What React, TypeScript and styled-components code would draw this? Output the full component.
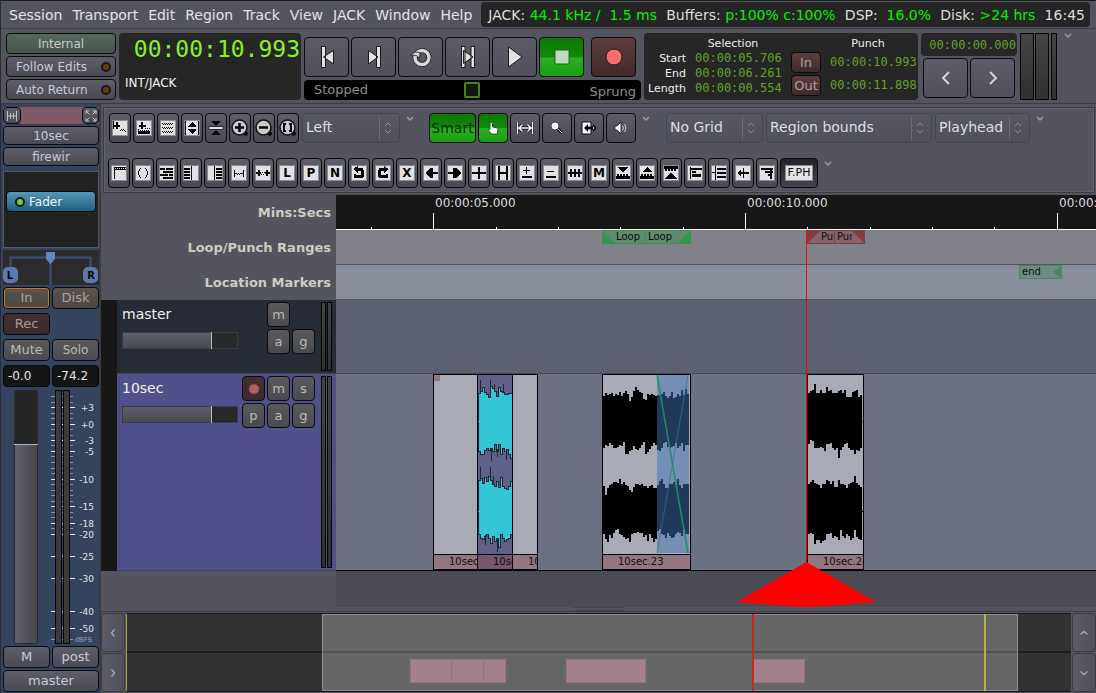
import React from "react";
import styled, { createGlobalStyle, css } from "styled-components";

const GlobalStyle = createGlobalStyle`
  *, *::before, *::after { box-sizing: border-box; }
  body {
    margin: 0;
    background: #53545d;
    color: #dedede;
    font: 12px/16px "DejaVu Sans", sans-serif;
  }
  button, select, input { font: inherit; color: inherit; margin: 0; }
  button { padding: 0; cursor: pointer; }
  svg { display: block; flex: none; }
`;

/* ---------- shared parts ---------- */

const face = {
  plain: "linear-gradient(#5e5e69, #4a4a54)",
  grey: "linear-gradient(#5b5c65, #4f5059)",
  flat: "linear-gradient(#5a5a5c, #494a52)",
  green: "linear-gradient(#0d7804 0%, #118a08 50%, #2cae26 52%, #17a010 100%)",
  olive: "linear-gradient(#55685a, #47554b)",
  red: "linear-gradient(#5e3d3f, #402a2c)",
  dimRed: "linear-gradient(#432f31, #3a2c2e)",
  brown: "linear-gradient(#5a534f, #4c4744)",
  blue: "linear-gradient(#5796b5, #1d6080)",
  pressed: "linear-gradient(#222228, #44444d)",
};

const ink: Partial<Record<keyof typeof face, string>> = {
  flat: "#b9bcab",
  red: "#a9a2a2",
  dimRed: "#a39c98",
  brown: "#a6a49c",
};

const Button = styled.button<{ $face?: keyof typeof face; $ring?: string; $size?: number }>`
  display: flex;
  align-items: center;
  justify-content: center;
  min-width: 0;
  border: 1px solid #0b0b0d;
  border-radius: 4px;
  box-shadow: ${(p) => (p.$ring ? `inset 0 0 0 1px ${p.$ring}` : "none")};
  background: ${(p) => face[p.$face ?? "plain"]};
  color: ${(p) => ink[p.$face ?? "plain"] ?? "#c9cad6"};
  font-size: ${(p) => p.$size ?? 12}px;
  overflow: hidden;
  white-space: nowrap;
`;

const Clock = styled.span<{ $size?: number; $bright?: boolean }>`
  font-family: "DejaVu Sans Mono", monospace;
  font-size: ${(p) => p.$size ?? 12}px;
  line-height: ${(p) => (p.$size ? 28 : 15)}px;
  color: ${(p) => (p.$bright ? "#8bf127" : "#65a125")};
  white-space: nowrap;
`;

const MeterBar = styled.div<{ $w: number }>`
  width: ${(p) => p.$w}px;
  border: 1px solid #050505;
  background: linear-gradient(#454545, #303030);
`;

const Chevron = () => (
  <svg width="8" height="6" viewBox="0 0 8 6" fill="none" stroke="#9c9ca0" strokeWidth="1.5">
    <path d="M1 1l3 3 3-3" />
  </svg>
);

/* ---------- menu bar ---------- */

const Page = styled.div`
  display: flex;
  flex-direction: column;
  min-height: 100vh;
  border-top: 1px solid #1d1d20;
  border-left: 1px solid #2c2c30;
  overflow: hidden;
`;

const MenuBar = styled.header`
  display: flex;
  align-items: center;
  height: 28px;
  padding: 0 6px 0 3px;
  border-bottom: 1px solid #3c3c42;
  font-size: 14px;
`;

const Menus = styled.nav`
  display: flex;
`;

const MenuButton = styled.button`
  border: 0;
  padding: 0 5px;
  background: none;
  color: #e3e3e3;
`;

const Status = styled.div`
  display: flex;
  flex: 1;
  align-items: center;
  justify-content: space-between;
  height: 25px;
  margin-left: 4px;
  padding: 0 5px 0 7px;
  border-radius: 4px;
  background: #252525;
  white-space: pre;
`;

const Good = styled.span`
  color: #00f400;
`;

/* ---------- transport ---------- */

const Transport = styled.section`
  display: flex;
  gap: 3px;
  height: 75px;
  padding: 4px 5px 3px;
  border-bottom: 1px solid #3c3c42;
`;

const SyncColumn = styled.div`
  display: grid;
  grid-template-rows: repeat(3, 21px);
  gap: 2px;
  width: 110px;
`;

const LedButton = styled(Button)`
  justify-content: space-between;
  padding: 0 4px 0 9px;
`;

const Led = styled.span<{ $on?: boolean }>`
  width: 10px;
  height: 10px;
  border: 2px solid #19191b;
  border-radius: 5px;
  background: ${(p) => (p.$on ? "#6fd03a" : "#5e4205")};
`;

const BigClock = styled.div`
  display: flex;
  flex-direction: column;
  justify-content: space-between;
  width: 182px;
  height: 67px;
  padding: 2px 1px 9px 6px;
  border-radius: 4px;
  background: #262626;
  color: #f2f2f2;
  line-height: 16px;
`;

const BigDigits = styled.div`
  text-align: right;
`;

const TransportColumn = styled.div`
  width: 337px;
  padding-top: 4px;
`;

const TransportButtons = styled.div`
  display: flex;
  gap: 2px;
  margin-bottom: 3px;
`;

const TransportButton = styled(Button)<{ $apart?: boolean }>`
  width: 45px;
  height: 40px;
  margin-left: ${(p) => (p.$apart ? 5 : 0)}px;
`;

const Shuttle = styled.div`
  display: grid;
  grid-template-columns: 70px 1fr 76px;
  align-items: center;
  height: 20px;
  padding: 0 5px 0 10px;
  border-radius: 4px;
  background: #000;
  color: #8d8d8d;
  font-size: 13px;
`;

const ShuttleSlider = styled.input`
  appearance: none;
  width: 100%;
  height: 18px;
  background: none;
  &::-webkit-slider-thumb {
    appearance: none;
    width: 16px;
    height: 16px;
    border: 2px solid #4a8218;
    border-radius: 2px;
    background: #10180a;
  }
`;

const ShuttleMode = styled.button`
  border: 0;
  padding-top: 3px;
  background: none;
  text-align: right;
`;

const SelectionBox = styled.div`
  display: flex;
  gap: 12px;
  width: 274px;
  height: 67px;
  padding: 3px 4px;
  border-radius: 4px;
  background: #262626;
  color: #ededed;
  font-size: 11px;
  line-height: 15px;
`;

const SelectionGrid = styled.div`
  display: grid;
  grid-template-columns: 38px 84px;
  grid-auto-rows: 15px;
  column-gap: 9px;
  text-align: right;
`;

const PunchGrid = styled.div`
  display: grid;
  grid-template: 14px 21px 21px / 30px 84px;
  gap: 2px 9px;
  align-items: center;
`;

const PunchButton = styled(Button)`
  height: 21px;
`;

const ClockHead = styled.span`
  grid-column: 2;
  padding-right: 8px;
  text-align: center;
`;

const NavColumn = styled.div`
  width: 96px;
`;

const NavClock = styled.div`
  height: 23px;
  margin-bottom: 2px;
  padding: 4px 1px;
  border-radius: 4px;
  background: #262626;
  text-align: right;
`;

const NavButtons = styled.div`
  display: grid;
  grid-template-columns: 45px 45px;
  grid-template-rows: 40px;
  gap: 2px;
  padding-left: 2px;
`;

const Meters = styled.div`
  display: flex;
  gap: 1px;
  height: 67px;
  margin-right: 4px;
`;

/* ---------- main split ---------- */

const Main = styled.main`
  display: flex;
  flex: 1;
`;

const EditorColumn = styled.div`
  display: flex;
  flex: 1;
  flex-direction: column;
  min-width: 0;
`;

/* ---------- mixer strip ---------- */

const Strip = styled.aside`
  display: flex;
  flex-direction: column;
  gap: 2px;
  width: 100px;
  padding: 3px 0 1px 2px;
  border-right: 2px solid #3c3c42;
  background: #34445f;
`;

const StripTop = styled.div`
  display: grid;
  grid-template: 17px / 18px 1fr 17px;
  background: #825a66;
`;

const StripButton = styled(Button)`
  height: ${(p) => (p.$size === 13 ? 22 : 19)}px;
`;

const Pair = styled.div`
  display: grid;
  grid-template-columns: 47px 47px;
  grid-auto-rows: 22px;
  gap: 4px 2px;
`;

const Processors = styled.div`
  height: 77px;
  margin: 3px 0 0;
  padding: 19px 2px;
  border: 1px solid #58585c;
  background: #222;
`;

const Processor = styled(Button)`
  justify-content: flex-start;
  gap: 4px;
  width: 100%;
  height: 21px;
  padding-left: 8px;
  color: #eef4f8;
`;

const GainInput = styled.input`
  width: 100%;
  height: 22px;
  border: 1px solid #08080a;
  border-radius: 4px;
  padding: 0 4px;
  background: #151515;
  color: #e6e6e6;
  font-size: 12px;
`;

const FaderArea = styled.div`
  display: flex;
  flex: 1;
  gap: 13px;
  min-height: 254px;
  margin-top: 1px;
  padding-left: 11px;
`;

const VerticalFader = styled.input`
  appearance: none;
  writing-mode: vertical-lr;
  direction: rtl;
  width: 24px;
  min-height: 0;
  border: 1px solid #26282c;
  border-radius: 2px;
  background: linear-gradient(#232526 0 21%, transparent 21%),
    linear-gradient(90deg, #60606c, #484852);
  &::-webkit-slider-thumb {
    appearance: none;
    width: 24px;
    height: 1px;
    background: #b3b3c6;
  }
`;

/* ---------- toolbars ---------- */

const ToolPanel = styled.section`
  display: flex;
  flex-direction: column;
  justify-content: space-between;
  height: 86px;
  margin: 3px 1px 2px 2px;
  padding: 5px 4px 4px;
  border: 1px solid #3a3a40;
  box-shadow: inset 0 0 0 1px #5f6069;
`;

const ToolRow = styled.div<{ $indent?: number }>`
  display: flex;
  gap: 2px;
  height: 30px;
  padding-left: ${(p) => p.$indent ?? 0}px;
`;

const ToolButton = styled(Button)<{ $w: number }>`
  flex: none;
  width: ${(p) => p.$w}px;
`;

const ChevronSlot = styled.span<{ $after?: number }>`
  width: 8px;
  margin: 3px ${(p) => p.$after ?? 0}px 0 4px;
`;

const PickerFrame = styled.label<{ $w: number }>`
  display: grid;
  grid-template-columns: 1fr 20px;
  align-items: center;
  width: ${(p) => p.$w}px;
  height: 30px;
  margin-left: 1px;
  border: 1px solid #45464e;
  border-radius: 4px;
  background: linear-gradient(#575861, #4f5059);
`;

const PickerSelect = styled.select`
  grid-area: 1 / 1 / 2 / 3;
  appearance: none;
  height: 28px;
  border: 0;
  padding: 0 0 2px 3px;
  background: none;
  color: #dedee2;
  font-size: 14px;
`;

const PickerArrows = styled.span`
  grid-area: 1 / 2;
  display: flex;
  align-items: center;
  height: 24px;
  padding-left: 4px;
  border-left: 1px solid #6b6c74;
  pointer-events: none;
`;

const Picker = ({ label, value, w }: { label: string; value: string; w: number }) => (
  <PickerFrame $w={w}>
    <PickerSelect aria-label={label}>
      <option>{value}</option>
    </PickerSelect>
    <PickerArrows>
      <svg width="8" height="12" viewBox="0 0 8 12" fill="none" stroke="#8d8e94">
        <path d="M1 4l3-3 3 3M1 8l3 3 3-3" />
      </svg>
    </PickerArrows>
  </PickerFrame>
);

const SmartText = styled.span`
  color: #0a2c08;
`;

const Plate = styled.span`
  padding: 0 2px;
  border: 1px solid #8c8c90;
  background: #e2e2e4;
  color: #080808;
  font-size: 11px;
  line-height: 14px;
`;

type Art = { r?: string; d?: string; t?: string };

const rects = (list: string) =>
  list
    .split(" ")
    .map((s) => {
      const [x, y, w, h] = s.split(",");
      return `M${x} ${y}h${w}v${h}h-${w}z`;
    })
    .join("");

const TileIcon = ({ r, d, t }: Art) => (
  <svg width="16" height="16" viewBox="0 0 16 16" shapeRendering="crispEdges">
    <rect width="16" height="16" fill="#8c8c90" />
    <rect x="1" y="1" width="14" height="14" fill="#e2e2e4" />
    {r && <path d={rects(r)} fill="#050505" />}
    {d && <path d={d} fill="#050505" />}
    {t && (
      <text x="8" y="12" textAnchor="middle" fontSize="12" fontWeight="700" fill="#050505">
        {t}
      </text>
    )}
  </svg>
);

const zoomArt: (Art & { name: string })[] = [
  { name: "Zoom to selection", r: "4,2,2,7 2,5,6,2 1,1,1,8 8,10,1,1 9,9,1,1 10,10,1,1 11,9,1,1 12,10,1,1 13,11,1,1" },
  { name: "Zoom to session", r: "5,2,2,7 3,5,7,2 9,8,1,1 11,8,1,1 13,8,1,1 2,9,1,3 4,10,1,1 6,10,1,1 8,10,1,1 10,10,1,1 12,10,1,1 2,11,12,3" },
  { name: "Fit tracks", r: "2,3,1,1 4,3,1,1 6,3,1,1 8,3,1,1 10,3,1,1 12,3,1,1 3,4,1,1 5,4,1,1 7,4,1,1 9,4,1,1 11,4,1,1 2,7,1,1 4,7,1,1 6,7,1,1 8,7,1,1 10,7,1,1 12,7,1,1 3,8,1,1 5,8,1,1 7,8,1,1 9,8,1,1 11,8,1,1 2,11,1,1 4,11,1,1 6,11,1,1 8,11,1,1 10,11,1,1 12,11,1,1 3,12,1,1 5,12,1,1 7,12,1,1 9,12,1,1 11,12,1,1" },
  { name: "Expand tracks", r: "1,1,1,14 14,1,1,14", d: "M8 2l4 4v1H4V6zM8 14l4-4V9H4v1z" },
];

const editArt: (Art & { name: string })[] = [
  { name: "Range", r: "3,2,1,12 4,2,11,1 4,4,11,1 5,3,1,1 7,3,1,1 9,3,1,1 11,3,1,1 13,3,1,1" },
  { name: "Loop range", r: "5,3,1,1 4,4,1,2 3,6,1,4 4,10,1,2 5,12,1,1 10,3,1,1 11,4,1,2 12,6,1,4 11,10,1,2 10,12,1,1" },
  { name: "Stagger", r: "1,3,5,2 7,3,7,2 4,6,10,2 1,9,8,2 10,9,4,2 4,12,10,2" },
  { name: "Bars left", r: "1,3,6,2 1,6,6,2 1,9,6,2 1,12,6,2 8,1,1,14" },
  { name: "Bars right", r: "9,3,6,2 9,6,6,2 9,9,6,2 9,12,6,2 7,1,1,14" },
  { name: "Fit inside", r: "3,5,1,7 12,5,1,7 4,8,2,1 6,9,1,1 7,8,1,1 8,9,1,1 9,8,1,1 10,8,2,1" },
  { name: "Fit outside", r: "3,5,2,6 11,5,2,6 1,7,5,2 10,7,5,2 6,9,1,1 7,7,1,1 8,9,1,1 9,7,1,1" },
  { name: "Lock", t: "L" },
  { name: "Place", t: "P" },
  { name: "Normalize", t: "N" },
  { name: "Undo", r: "6,3,6,3 10,5,3,7 4,10,8,3 3,9,2,4", d: "M2 4l5-3v7z" },
  { name: "Redo", r: "4,3,6,3 3,5,3,7 4,10,8,3 11,9,2,4", d: "M14 4L9 1v7z" },
  { name: "Delete", t: "X" },
  { name: "Nudge left", r: "8,7,7,2", d: "M2 8l5-5h3v10H7z" },
  { name: "Nudge right", r: "1,7,7,2", d: "M14 8L9 3H6v10h3z" },
  { name: "Split", r: "1,7,14,2 7,2,2,12" },
  { name: "Join", r: "3,1,2,14 11,1,2,14 5,7,6,2" },
  { name: "Gain up", r: "4,5,7,1 7,2,1,7 3,11,10,2" },
  { name: "Gain down", r: "4,6,7,1 3,11,10,2" },
  { name: "Transients", r: "1,7,14,2 3,4,2,8 7,4,2,8 11,4,2,8" },
  { name: "Mute region", t: "M" },
  { name: "Lower", r: "2,9,2,2 5,9,2,2 8,9,2,2 11,9,2,2 1,11,14,3", d: "M3 2h10L8 8z" },
  { name: "Raise", r: "2,9,2,2 5,9,2,2 8,9,2,2 11,9,2,2 1,11,14,3", d: "M3 7h10L8 2z" },
  { name: "Raise to top", r: "1,1,14,3 2,4,2,2 5,4,2,2 8,4,2,2 11,4,2,2", d: "M2 14h12L8 7z" },
  { name: "Align start", r: "3,2,1,12 4,3,11,2 5,6,4,2 5,9,9,3" },
  { name: "Align sync", r: "4,1,1,14 6,3,9,2 6,7,9,2 6,11,9,2 1,7,3,1" },
  { name: "Align end", r: "8,3,1,10 9,7,5,2 3,7,5,2 5,5,1,6 4,6,1,4" },
  { name: "Align relative", r: "2,3,12,2 6,6,8,2 9,9,3,2 11,5,2,9" },
];

const Lens = ({ children }: { children: React.ReactNode }) => (
  <svg width="18" height="18" viewBox="0 0 18 18">
    <path d="M12 12l4 4" stroke="#050505" strokeWidth="4" />
    <circle cx="8.500" cy="8.500" r="7.500" fill="#c9c9cb" stroke="#111" strokeWidth="1.500" />
    {children}
  </svg>
);

/* ---------- timeline ---------- */

const Editor = styled.section`
  position: relative;
  display: flex;
  flex: 1;
  flex-direction: column;
  overflow: hidden;
`;

const Row = styled.div<{ $h: number }>`
  display: grid;
  grid-template-columns: 235px 1fr;
  height: ${(p) => p.$h}px;
`;

const RulerName = styled.div`
  padding-right: 5px;
  color: #cccdbf;
  font-size: 13px;
  font-weight: 700;
  line-height: 35px;
  text-align: right;
`;

const Lane = styled.div<{ $bg: string; $line: string }>`
  position: relative;
  overflow: hidden;
  border-bottom: 1px solid ${(p) => p.$line};
  background: ${(p) => p.$bg};
`;

const Tick = styled.span<{ $x: number; $major?: boolean }>`
  position: absolute;
  bottom: 0;
  left: ${(p) => p.$x}px;
  width: 1px;
  height: ${(p) => (p.$major ? 16 : 2)}px;
  background: #fff;
`;

const TickLabel = styled.span<{ $x: number }>`
  position: absolute;
  top: 0;
  left: ${(p) => p.$x}px;
  color: #dedede;
  white-space: nowrap;
`;

const MarkerBox = styled.div<{ $x: number; $w: number; $tone: string; $pad: number }>`
  position: absolute;
  top: 0;
  left: ${(p) => p.$x}px;
  width: ${(p) => p.$w}px;
  height: 14px;
  padding-left: ${(p) => p.$pad}px;
  overflow: hidden;
  border: 1px solid ${(p) => p.$tone};
  background: ${(p) => p.$tone}66;
  color: #0c0c0c;
  font-size: 10px;
  line-height: 11px;
`;

const flagShape = {
  bottomLeft: css`left: 0; clip-path: polygon(0 0, 100% 100%, 0 100%);`,
  bottomRight: css`right: 0; clip-path: polygon(100% 0, 100% 100%, 0 100%);`,
  topLeft: css`left: 0; clip-path: polygon(0 0, 100% 0, 0 100%);`,
  topRight: css`right: 0; clip-path: polygon(0 0, 100% 0, 100% 100%);`,
  arrow: css`right: 0; width: 8px; clip-path: polygon(100% 0, 100% 100%, 0 50%);`,
};

const Flag = styled.span<{ $shape: keyof typeof flagShape; $tone: string }>`
  position: absolute;
  top: 0;
  width: 12px;
  height: 12px;
  background: ${(p) => p.$tone};
  ${(p) => flagShape[p.$shape]}
`;

const MarkerText = styled.span<{ $w?: number }>`
  display: block;
  width: ${(p) => (p.$w ? `${p.$w}px` : "auto")};
  overflow: hidden;
`;

const HeaderWrap = styled.div`
  display: grid;
  grid-template-columns: 16px 1fr;
  background: #171717;
`;

const TrackHeader = styled.div<{ $bg: string }>`
  display: grid;
  grid-template-columns: 120px 79px 11px;
  padding: 2px 4px 2px 5px;
  border-bottom: 1px solid #44454c;
  background: ${(p) => p.$bg};
`;

const TrackName = styled.div`
  height: 30px;
  color: #f0f0f0;
  font-size: 14px;
  line-height: 24px;
`;

const TrackFader = styled.input`
  appearance: none;
  display: block;
  width: 116px;
  height: 17px;
  border: 1px solid #3a3b40;
  background: linear-gradient(90deg, transparent 78%, #26282a 78%),
    linear-gradient(#5e5f69, #484851);
  &::-webkit-slider-thumb {
    appearance: none;
    width: 1px;
    height: 17px;
    background: #b8b8c8;
  }
`;

const TrackButtons = styled.div`
  display: grid;
  grid-template-columns: repeat(3, 23px);
  grid-auto-rows: 25px;
  gap: 2px;
`;

const MiniButton = styled(Button)<{ $col?: number }>`
  grid-column: ${(p) => p.$col ?? "auto"};
`;

const TrackMeters = styled.div`
  display: flex;
  gap: 1px;
`;

const RegionBox = styled.div<{ $x: number; $w: number; $bg: string }>`
  position: absolute;
  top: 0;
  bottom: 0;
  left: ${(p) => p.$x}px;
  display: flex;
  flex-direction: column;
  width: ${(p) => p.$w}px;
  border: 1px solid #000;
  background: ${(p) => p.$bg};
`;

const RegionBody = styled.div`
  flex: 1;
  min-height: 0;
  overflow: hidden;
`;

const Handle = styled.div`
  width: 6px;
  height: 6px;
  background: #937681;
`;

const RegionName = styled.div<{ $bg: string }>`
  height: 15px;
  padding-left: 15px;
  overflow: hidden;
  border-top: 1px solid #000;
  background: ${(p) => p.$bg};
  color: #120c0e;
  font-size: 10px;
  line-height: 14px;
  white-space: nowrap;
`;

const Filler = styled.div`
  display: grid;
  grid-template-columns: 235px 1fr;
  flex: 1;
  min-height: 36px;
`;

const FillerLane = styled.div`
  grid-column: 2;
  background: #4b4b55;
`;

const Playhead = styled.svg`
  position: absolute;
  top: 35px;
  left: 636px;
`;

const Grip = styled.div`
  width: 48px;
  height: 4px;
  margin: 0 auto;
  border: dotted #36363c;
  border-width: 1px 0;
`;

/* waveform edges, one value per two pixels */
type Wave = { top1: number[]; bot1: number[]; top2: number[]; bot2: number[] };

const waveCyan: Wave = {
  top1: [18, 16, 12, 17, 19, 22, 11, 13, 16, 21, 12, 16, 17, 19, 19, 18, 18],
  bot1: [76, 79, 79, 75, 73, 75, 73, 76, 69, 76, 69, 79, 73, 76, 74, 79, 83],
  top2: [105, 103, 108, 102, 106, 101, 105, 109, 111, 106, 112, 102, 111, 113, 114, 111, 106],
  bot2: [159, 163, 164, 161, 159, 163, 168, 161, 166, 163, 172, 159, 163, 166, 164, 163, 159],
};

const wave23: Wave = {
  top1: [21, 18, 20, 19, 18, 21, 19, 20, 17, 21, 18, 16, 19, 26, 22, 16, 12, 15, 17, 18, 24, 25, 19, 20, 19, 20, 21, 20, 20, 19, 17, 21, 23, 21, 17, 23, 22, 19, 21, 15, 20, 14, 19],
  bot1: [73, 70, 71, 68, 70, 73, 73, 72, 70, 71, 67, 79, 79, 76, 75, 71, 74, 75, 73, 70, 67, 79, 77, 74, 71, 68, 70, 75, 76, 73, 68, 67, 72, 73, 72, 71, 68, 73, 71, 68, 76, 70, 70],
  top2: [111, 120, 113, 110, 109, 107, 107, 108, 104, 109, 107, 110, 111, 115, 117, 112, 109, 109, 110, 109, 111, 111, 113, 111, 110, 113, 113, 110, 106, 104, 109, 113, 113, 109, 109, 107, 110, 104, 110, 113, 109, 109, 109],
  bot2: [159, 164, 167, 160, 163, 158, 155, 154, 159, 160, 162, 164, 163, 167, 159, 158, 158, 157, 158, 158, 162, 160, 166, 159, 163, 167, 164, 156, 154, 159, 160, 163, 158, 161, 163, 162, 159, 157, 158, 161, 154, 159, 159],
};

const wave24: Wave = {
  top1: [18, 16, 15, 9, 18, 18, 15, 18, 18, 12, 16, 15, 18, 18, 18, 16, 15, 18, 15, 22, 22, 22, 17, 16, 15, 22, 20],
  bot1: [69, 65, 66, 73, 73, 73, 72, 73, 76, 69, 69, 68, 73, 75, 73, 83, 75, 72, 69, 68, 73, 75, 75, 79, 75, 76, 73],
  top2: [109, 107, 105, 108, 109, 110, 113, 109, 109, 105, 106, 109, 106, 112, 112, 105, 109, 109, 110, 113, 109, 108, 107, 101, 108, 110, 112],
  bot2: [159, 158, 159, 169, 165, 165, 168, 166, 165, 159, 159, 158, 163, 161, 162, 165, 155, 161, 163, 159, 161, 165, 163, 155, 162, 164, 165],
};

const channel = (top: number[], bottom: number[]) =>
  `M0 ${top[0]}` +
  top.map((y, i) => `V${y}H${i * 2 + 2}`).join("") +
  [...bottom].reverse().map((y, i) => `V${y}H${(bottom.length - 1 - i) * 2}`).join("") +
  "z";

const Waveform = ({ wave, fill, edge, w }: { wave: Wave; fill: string; edge?: string; w: number }) => (
  <svg width={w} height="179" shapeRendering="crispEdges">
    <g fill={fill} stroke={edge ?? "none"}>
      <path d={channel(wave.top1, wave.bot1)} />
      <path d={channel(wave.top2, wave.bot2)} />
    </g>
    {edge && (
      <path
        d="M2.500 18V5M12.500 14V5M16.500 16V9M25.500 18V9M13.500 74v12M19.500 74v8M2.500 104V92M12.500 104V92M15.500 110V101M19.500 164v13M28.500 77v8M7.500 160v10"
        stroke={edge}
      />
    )}
    <path d={`M0 46h${w}M0 136h${w}`} stroke={fill} />
    {w === 86 && (
      <g>
        <rect x="54" width="32" height="178" fill="#3f72b6" fillOpacity="0.500" />
        <path d="M54 0l31 178" stroke="#1c8f66" strokeWidth="1.500" shapeRendering="auto" />
        <path d="M85 0L54 178" stroke="#2a7d80" shapeRendering="auto" opacity="0.700" />
      </g>
    )}
  </svg>
);

/* ---------- session summary ---------- */

const Summary = styled.footer`
  display: grid;
  grid-template-columns: 24px 1fr 24px;
  gap: 1px;
  height: 82px;
  padding: 1px 0;
  border-top: 1px solid #3c3c42;
`;

const SummaryButtons = styled.div`
  display: grid;
  grid-template-rows: 1fr 1fr;
  gap: 1px;
`;

const SummaryButton = styled(Button)`
  border-color: #3a3a41;
  background: linear-gradient(90deg, #5b5c66, #4f505a);
`;

const SummaryMap = styled.div`
  position: relative;
  overflow: hidden;
  border: solid #1a1a1a;
  border-width: 1px 0;
  background: linear-gradient(#333 37px, #1b1b1b 37px 39px, #333 39px);
`;

const SummaryView = styled.div`
  position: absolute;
  inset: 0 auto 0 196px;
  width: 696px;
  border: 1px solid #8e8e8e;
  background: linear-gradient(#666 36px, #535353 36px 38px, #666 38px);
`;

const SummaryBlock = styled.span<{ $x: number; $w: number }>`
  position: absolute;
  top: 45px;
  left: ${(p) => p.$x}px;
  width: ${(p) => p.$w}px;
  height: 24px;
  border: 1px solid #957580;
  background: #a3808b;
`;

const SummaryLine = styled.span<{ $x: number; $color: string }>`
  position: absolute;
  inset: 0 auto 0 ${(p) => p.$x}px;
  width: 2px;
  background: ${(p) => p.$color};
`;

/* ---------- data ---------- */

const menus = ["Session", "Transport", "Edit", "Region", "Track", "View", "JACK", "Window", "Help"];

const scale: [number, string][] = [
  [17, "+3"], [34, "+0"], [50, "-3"], [61, "-5"], [89, "-10"], [116, "-15"],
  [133, "-18"], [144, "-20"], [166, "-25"], [188, "-30"], [221, "-40"], [238, "-50"],
];
const minorScale = [6, 12, 23, 28, 39, 45, 55, 66, 72, 78, 83, 94, 100, 105, 111, 122, 127, 138, 249];

const GREEN = "#35954e";
const RED = "#853c41";
const END = "#4c8660";

const icon = { width: 24, height: 24, viewBox: "0 0 24 24", fill: "#e2e2e2", stroke: "#1a1a1c" };

const Pointed = ({ d }: { d: string }) => (
  <svg width="10" height="10" viewBox="0 0 10 10" fill="none" stroke="#a5a5a8" strokeWidth="1.500">
    <path d={d} />
  </svg>
);

export default function App() {
  return (
    <Page>
      <GlobalStyle />
      <MenuBar>
        <Menus>
          {menus.map((m) => (
            <MenuButton key={m}>{m}</MenuButton>
          ))}
        </Menus>
        <Status>
          <span>JACK: <Good>{"44.1 kHz /  1.5 ms"}</Good></span>
          <span>Buffers: <Good>p:100% c:100%</Good></span>
          <span>DSP: <Good>{" 16.0%"}</Good></span>
          <span>Disk: <Good>&gt;24 hrs</Good></span>
          <span>16:45</span>
        </Status>
      </MenuBar>

      <Transport>
        <SyncColumn>
          <Button $face="olive">Internal</Button>
          <LedButton>Follow Edits<Led /></LedButton>
          <LedButton>Auto Return<Led /></LedButton>
        </SyncColumn>
        <BigClock>
          <BigDigits><Clock $size={23} $bright>00:00:10.993</Clock></BigDigits>
          <span>INT/JACK</span>
        </BigClock>
        <TransportColumn>
          <TransportButtons>
            <TransportButton $face="grey" aria-label="Go to start">
              <svg {...icon}><path d="M6.500 1.500h4v21h-4zM8.500 12l10-6.500v13.500z" /></svg>
            </TransportButton>
            <TransportButton $face="grey" aria-label="Go to end">
              <svg {...icon}><path d="M14.500 1.500h4v21h-4zM16 12L6.500 5.500v13.500z" /></svg>
            </TransportButton>
            <TransportButton $face="grey" aria-label="Loop">
              <svg {...icon} fill="none">
                <circle cx="13" cy="12.500" r="7" stroke="#1a1a1c" strokeWidth="5" />
                <circle cx="13" cy="12.500" r="7" stroke="#d8d8d8" strokeWidth="3.500" />
                <path d="M1.500 10L6 7l5 .5-.5 5.500-3-2.500z" fill="#d8d8d8" strokeWidth="0.800" />
              </svg>
            </TransportButton>
            <TransportButton $face="grey" aria-label="Play selection">
              <svg {...icon}><path d="M5.500 1.500h3.500v21h-3.500zM15 1.500h3.500v21h-3.500zM7.500 5.500L17 12l-9.500 6.500z" /></svg>
            </TransportButton>
            <TransportButton $face="grey" aria-label="Play">
              <svg {...icon}><path d="M5.500 2L19 12 5.500 22z" /></svg>
            </TransportButton>
            <TransportButton $face="green" aria-label="Stop">
              <svg {...icon}><path d="M5 5h14v14H5z" fill="#bcdcbb" stroke="#285c26" /></svg>
            </TransportButton>
            <TransportButton $face="red" $apart aria-label="Record">
              <svg {...icon}><circle cx="12" cy="12" r="8" fill="#f66d6d" stroke="#2a1718" /></svg>
            </TransportButton>
          </TransportButtons>
          <Shuttle>
            <span>Stopped</span>
            <ShuttleSlider type="range" defaultValue={50} aria-label="Shuttle" />
            <ShuttleMode>Sprung</ShuttleMode>
          </Shuttle>
        </TransportColumn>
        <SelectionBox>
          <SelectionGrid>
            <ClockHead>Selection</ClockHead>
            <span>Start</span><Clock>00:00:05.706</Clock>
            <span>End</span><Clock>00:00:06.261</Clock>
            <span>Length</span><Clock>00:00:00.554</Clock>
          </SelectionGrid>
          <PunchGrid>
            <ClockHead>Punch</ClockHead>
            <PunchButton $face="red" $size={13}>In</PunchButton><Clock>00:00:10.993</Clock>
            <PunchButton $face="red" $size={13}>Out</PunchButton><Clock>00:00:11.898</Clock>
          </PunchGrid>
        </SelectionBox>
        <NavColumn>
          <NavClock><Clock>00:00:00.000</Clock></NavClock>
          <NavButtons>
            <Button $face="grey" aria-label="Nudge back">
              <svg width="10" height="14" viewBox="0 0 10 14" fill="none" stroke="#d4d4d6" strokeWidth="2"><path d="M8 1L2 7l6 6" /></svg>
            </Button>
            <Button $face="grey" aria-label="Nudge forward">
              <svg width="10" height="14" viewBox="0 0 10 14" fill="none" stroke="#d4d4d6" strokeWidth="2"><path d="M2 1l6 6-6 6" /></svg>
            </Button>
          </NavButtons>
        </NavColumn>
        <Meters>
          <MeterBar $w={14} />
          <MeterBar $w={14} />
          <span />
          <MeterBar $w={6} />
        </Meters>
        <Chevron />
      </Transport>

      <Main>
        <Strip>
          <StripTop>
            <Button aria-label="Strip width">
              <svg width="12" height="10" viewBox="0 0 12 10" fill="none" stroke="#c4c4ca"><path d="M1.500 0v10M10.500 0v10M4.500 2v6M7.500 2v6M2 5h8" /></svg>
            </Button>
            <span />
            <Button aria-label="Hide strip">
              <svg width="12" height="12" viewBox="0 0 12 12" fill="none" stroke="#c4c4ca"><path d="M1 1l3.500 3.500M11 1L7.500 4.500M1 11l3.500-3.500M11 11L7.500 7.500M1 4V1h3M8 1h3v3M1 8v3h3M8 11h3V8" /></svg>
            </Button>
          </StripTop>
          <StripButton>10sec</StripButton>
          <StripButton>firewir</StripButton>
          <Processors>
            <Processor $face="blue"><Led $on />Fader</Processor>
          </Processors>
          <svg width="96" height="35" viewBox="0 0 96 35">
            <rect width="96" height="35" fill="#2c2b2e" />
            <path d="M7.500 17V7.500h80V17M47.500 2v34" fill="none" stroke="#3c5078" strokeWidth="2" />
            <path d="M43 2h9v7l-4.500 5L43 9z" fill="#6486bd" />
            <rect y="17" width="15" height="16" rx="5" fill="#5c7ab0" />
            <rect x="80" y="17" width="15" height="16" rx="5" fill="#5c7ab0" />
            <g fontSize="10" fontWeight="700" fill="#080808" textAnchor="middle">
              <text x="7" y="29">L</text>
              <text x="88" y="29">R</text>
            </g>
          </svg>
          <Pair>
            <Button $face="brown" $size={13} $ring="#c07a1e">In</Button>
            <Button $face="brown" $size={13}>Disk</Button>
            <Button $face="dimRed" $size={13}>Rec</Button>
            <span />
            <Button $face="flat" $size={13}>Mute</Button>
            <Button $face="flat">Solo</Button>
            <GainInput defaultValue="-0.0" aria-label="Gain" />
            <GainInput defaultValue="-74.2" aria-label="Peak" />
          </Pair>
          <FaderArea>
            <VerticalFader type="range" defaultValue={79} aria-label="Fader" />
            <svg width="48" height="254" viewBox="0 0 48 254">
              <g stroke="#8894ab" shapeRendering="crispEdges">
                {minorScale.map((y) => (
                  <path key={y} d={`M0 ${y + 0.5}h22`} />
                ))}
              </g>
              <g stroke="#e8e8ee" shapeRendering="crispEdges">
                {scale.map(([y]) => (
                  <path key={y} d={`M0 ${y + 0.5}h24`} />
                ))}
              </g>
              <g fill="#3b3b3b" stroke="#050505">
                <rect x="4.500" y="0.500" width="6" height="253" />
                <rect x="12.500" y="0.500" width="6" height="253" />
              </g>
              <g fill="#dfe3ea" fontSize="9" textAnchor="end">
                {scale.map(([y, label]) => (
                  <text key={y} x="43" y={y + 4}>{label}</text>
                ))}
              </g>
              <text x="41" y="252" fontSize="7" textAnchor="end" fill="#98a3b5">dBFS</text>
            </svg>
          </FaderArea>
          <Pair>
            <Button $size={13}>M</Button>
            <Button $size={13}>post</Button>
          </Pair>
          <StripButton $size={13}>master</StripButton>
        </Strip>

        <EditorColumn>
          <ToolPanel>
            <ToolRow $indent={1}>
              {zoomArt.map(({ name, ...art }) => (
                <ToolButton key={name} $w={22} aria-label={name}><TileIcon {...art} /></ToolButton>
              ))}
              <ToolButton $w={22} aria-label="Shrink tracks">
                <svg width="16" height="16" viewBox="0 0 16 16">
                  <path d="M3 1h10L8 6zM3 15h10l-5-5z" fill="#050505" />
                  <path d="M1 6.500h14v3H1z" fill="#e2e2e4" stroke="#333" />
                </svg>
              </ToolButton>
              <ToolButton $w={22} aria-label="Zoom in"><Lens><path d="M8.500 4v9M4 8.500h9" stroke="#050505" strokeWidth="2.500" /></Lens></ToolButton>
              <ToolButton $w={22} aria-label="Zoom out"><Lens><path d="M4 8.500h9" stroke="#050505" strokeWidth="2.500" /></Lens></ToolButton>
              <ToolButton $w={22} aria-label="Zoom full"><Lens><path d="M7 5H5v7h2M10 5h2v7h-2" fill="none" stroke="#050505" strokeWidth="2" /></Lens></ToolButton>
              <Picker label="Zoom focus" value="Left" w={98} />
              <ChevronSlot $after={13}><Chevron /></ChevronSlot>
              <ToolButton $w={47} $face="green" $size={14}><SmartText>Smart</SmartText></ToolButton>
              <ToolButton $w={30} $face="green" aria-label="Grab">
                <svg width="12" height="14" viewBox="0 0 12 14"><path d="M4 1.500c1 0 1.500.5 1.500 1V6l4.500 1c1 .3 1 1 1 2l-.8 4H4.500L1.500 9.500C1 8.500 2 8 3 8.500V2.500c0-.5.5-1 1-1z" fill="#fff" stroke="#0a3a06" strokeWidth="0.800" /></svg>
              </ToolButton>
              <ToolButton $w={30} aria-label="Range tool">
                <svg width="18" height="14" viewBox="0 0 18 14" fill="none">
                  <path d="M1.500 1v12M16.500 1v12M3 7h12M6.500 3.500L3 7l3.500 3.500M11.500 3.500L15 7l-3.500 3.500" stroke="#080808" strokeWidth="3" />
                  <path d="M1.500 1v12M16.500 1v12M3 7h12M6.500 3.500L3 7l3.500 3.500M11.500 3.500L15 7l-3.500 3.500" stroke="#f2f2f2" strokeWidth="1.500" />
                </svg>
              </ToolButton>
              <ToolButton $w={30} aria-label="Zoom tool">
                <svg width="14" height="14" viewBox="0 0 14 14">
                  <path d="M7 7l5 5" stroke="#0a0a0a" strokeWidth="3" />
                  <path d="M7 7l5 5" stroke="#ddd" />
                  <circle cx="5" cy="5" r="4" fill="#fff" stroke="#222" strokeWidth="0.800" />
                </svg>
              </ToolButton>
              <ToolButton $w={30} aria-label="Stretch tool">
                <svg width="16" height="14" viewBox="0 0 16 14">
                  <path d="M1 1h9v12H1z" fill="#fff" stroke="#080808" />
                  <path d="M3 7l4-4v2.500h5V3l3.500 4L12 11V8.500H7V11z" fill="#080808" />
                  <path d="M12 5.500L13.500 7 12 8.500z" fill="#fff" />
                </svg>
              </ToolButton>
              <ToolButton $w={30} aria-label="Audition tool">
                <svg width="14" height="14" viewBox="0 0 14 14">
                  <path d="M1 5h2l4-4v12L3 9H1z" fill="#fff" stroke="#111" strokeWidth="0.800" />
                  <path d="M8.500 4.500q2 2.500 0 5M10.500 3q3 4 0 8" fill="none" stroke="#cfcfd2" />
                </svg>
              </ToolButton>
              <ChevronSlot $after={13}><Chevron /></ChevronSlot>
              <Picker label="Grid" value="No Grid" w={97} />
              <Picker label="Snap" value="Region bounds" w={166} />
              <Picker label="Edit point" value="Playhead" w={95} />
              <ChevronSlot><Chevron /></ChevronSlot>
            </ToolRow>
            <ToolRow>
              {editArt.map(({ name, ...art }) => (
                <ToolButton key={name} $w={22} aria-label={name}><TileIcon {...art} /></ToolButton>
              ))}
              <ToolButton $w={38} $face="pressed"><Plate>F.PH</Plate></ToolButton>
              <ChevronSlot><Chevron /></ChevronSlot>
            </ToolRow>
          </ToolPanel>

          <Editor>
            <Row $h={35}>
              <RulerName>Mins:Secs</RulerName>
              <Lane $bg="#171717" $line="#fff">
                {[35, 160, 222, 284, 347, 471, 534, 596, 658].map((x) => (
                  <Tick key={x} $x={x} />
                ))}
                {[97, 409, 721].map((x, i) => (
                  <React.Fragment key={x}>
                    <Tick $x={x} $major />
                    <TickLabel $x={x + 2}>{["00:00:05.000", "00:00:10.000", "00:00:15.000"][i]}</TickLabel>
                  </React.Fragment>
                ))}
              </Lane>
            </Row>
            <Row $h={35}>
              <RulerName>Loop/Punch Ranges</RulerName>
              <Lane $bg="#808189" $line="#54555c">
                <MarkerBox $x={266} $w={44} $tone={GREEN} $pad={13}><Flag $shape="bottomLeft" $tone={GREEN} />Loop</MarkerBox>
                <MarkerBox $x={309} $w={46} $tone={GREEN} $pad={2}><Flag $shape="bottomRight" $tone={GREEN} />Loop</MarkerBox>
                <MarkerBox $x={471} $w={28} $tone={RED} $pad={13}><Flag $shape="topLeft" $tone={RED} />Punch</MarkerBox>
                <MarkerBox $x={498} $w={31} $tone={RED} $pad={2}>
                  <Flag $shape="topRight" $tone={RED} />
                  <MarkerText $w={15}>Punch</MarkerText>
                </MarkerBox>
              </Lane>
            </Row>
            <Row $h={35}>
              <RulerName>Location Markers</RulerName>
              <Lane $bg="#898f9a" $line="#54555c">
                <MarkerBox $x={683} $w={43} $tone={END} $pad={2}><Flag $shape="arrow" $tone={END} />end</MarkerBox>
              </Lane>
            </Row>

            <Row $h={74}>
              <HeaderWrap>
                <span />
                <TrackHeader $bg="#252c36">
                  <div>
                    <TrackName>master</TrackName>
                    <TrackFader type="range" defaultValue={78} aria-label="master level" />
                  </div>
                  <TrackButtons>
                    <MiniButton $face="flat" $size={13} $col={2}>m</MiniButton>
                    <MiniButton $face="flat" $size={13} $col={2}>a</MiniButton>
                    <MiniButton $face="flat" $size={13} $col={3}>g</MiniButton>
                  </TrackButtons>
                  <TrackMeters><MeterBar $w={5} /><MeterBar $w={5} /></TrackMeters>
                </TrackHeader>
              </HeaderWrap>
              <Lane $bg="#5b6171" $line="#44464f" />
            </Row>

            <Row $h={197}>
              <HeaderWrap>
                <span />
                <TrackHeader $bg="#50518a">
                  <div>
                    <TrackName>10sec</TrackName>
                    <TrackFader type="range" defaultValue={78} aria-label="10sec level" />
                  </div>
                  <TrackButtons>
                    <MiniButton $face="dimRed" aria-label="Record enable">
                      <svg width="12" height="12" viewBox="0 0 12 12"><circle cx="6" cy="6" r="5" fill="#b95f60" stroke="#7a4445" /></svg>
                    </MiniButton>
                    {["m", "s", "p", "a", "g"].map((t) => (
                      <MiniButton key={t} $face="flat" $size={13}>{t}</MiniButton>
                    ))}
                  </TrackButtons>
                  <TrackMeters><MeterBar $w={5} /><MeterBar $w={5} /></TrackMeters>
                </TrackHeader>
              </HeaderWrap>
              <Lane $bg="#6b7181" $line="#000">
                <RegionBox $x={97} $w={45} $bg="#a8abb5">
                  <RegionBody><Handle /></RegionBody>
                  <RegionName $bg="#937681">10sec</RegionName>
                </RegionBox>
                <RegionBox $x={176} $w={26} $bg="#a8abb5">
                  <RegionBody />
                  <RegionName $bg="#937681">10sec</RegionName>
                </RegionBox>
                <RegionBox $x={141} $w={36} $bg="#5f608a">
                  <RegionBody><Waveform wave={waveCyan} fill="#31c5d6" edge="#20252e" w={34} /></RegionBody>
                  <RegionName $bg="#745870">10sec</RegionName>
                </RegionBox>
                <RegionBox $x={266} $w={89} $bg="#a8abb5">
                  <RegionBody><Waveform wave={wave23} fill="#000" w={86} /></RegionBody>
                  <RegionName $bg="#937681">10sec.23</RegionName>
                </RegionBox>
                <RegionBox $x={471} $w={57} $bg="#a8abb5">
                  <RegionBody><Waveform wave={wave24} fill="#000" w={55} /></RegionBody>
                  <RegionName $bg="#937681">10sec.24</RegionName>
                </RegionBox>
              </Lane>
            </Row>

            <Filler><FillerLane /></Filler>
            <Playhead width="140" height="378" viewBox="0 0 140 378">
              <path d="M69.500 0v340" stroke="#f00" shapeRendering="crispEdges" />
              <path d="M69.500 332L139 372l-69.500 5.500L0 372z" fill="#f00" />
            </Playhead>
          </Editor>
          <Grip />

          <Summary>
            <SummaryButtons>
              <SummaryButton aria-label="Scroll left"><Pointed d="M6.500 1.500L3.500 5l3 3.500" /></SummaryButton>
              <SummaryButton aria-label="Scroll right"><Pointed d="M3.500 1.500L6.500 5l-3 3.500" /></SummaryButton>
            </SummaryButtons>
            <SummaryMap>
              <SummaryView />
              <SummaryBlock $x={284} $w={42} />
              <SummaryBlock $x={325} $w={33} />
              <SummaryBlock $x={357} $w={23} />
              <SummaryBlock $x={440} $w={80} />
              <SummaryBlock $x={627} $w={52} />
              <SummaryLine $x={-1} $color="#a8a020" />
              <SummaryLine $x={626} $color="#c22a26" />
              <SummaryLine $x={858} $color="#b9b04a" />
            </SummaryMap>
            <SummaryButtons>
              <SummaryButton aria-label="Scroll up"><Pointed d="M1.500 6.500L5 3.500l3.500 3" /></SummaryButton>
              <SummaryButton aria-label="Scroll down"><Pointed d="M1.500 3.500L5 6.500l3.500-3" /></SummaryButton>
            </SummaryButtons>
          </Summary>
        </EditorColumn>
      </Main>
    </Page>
  );
}
